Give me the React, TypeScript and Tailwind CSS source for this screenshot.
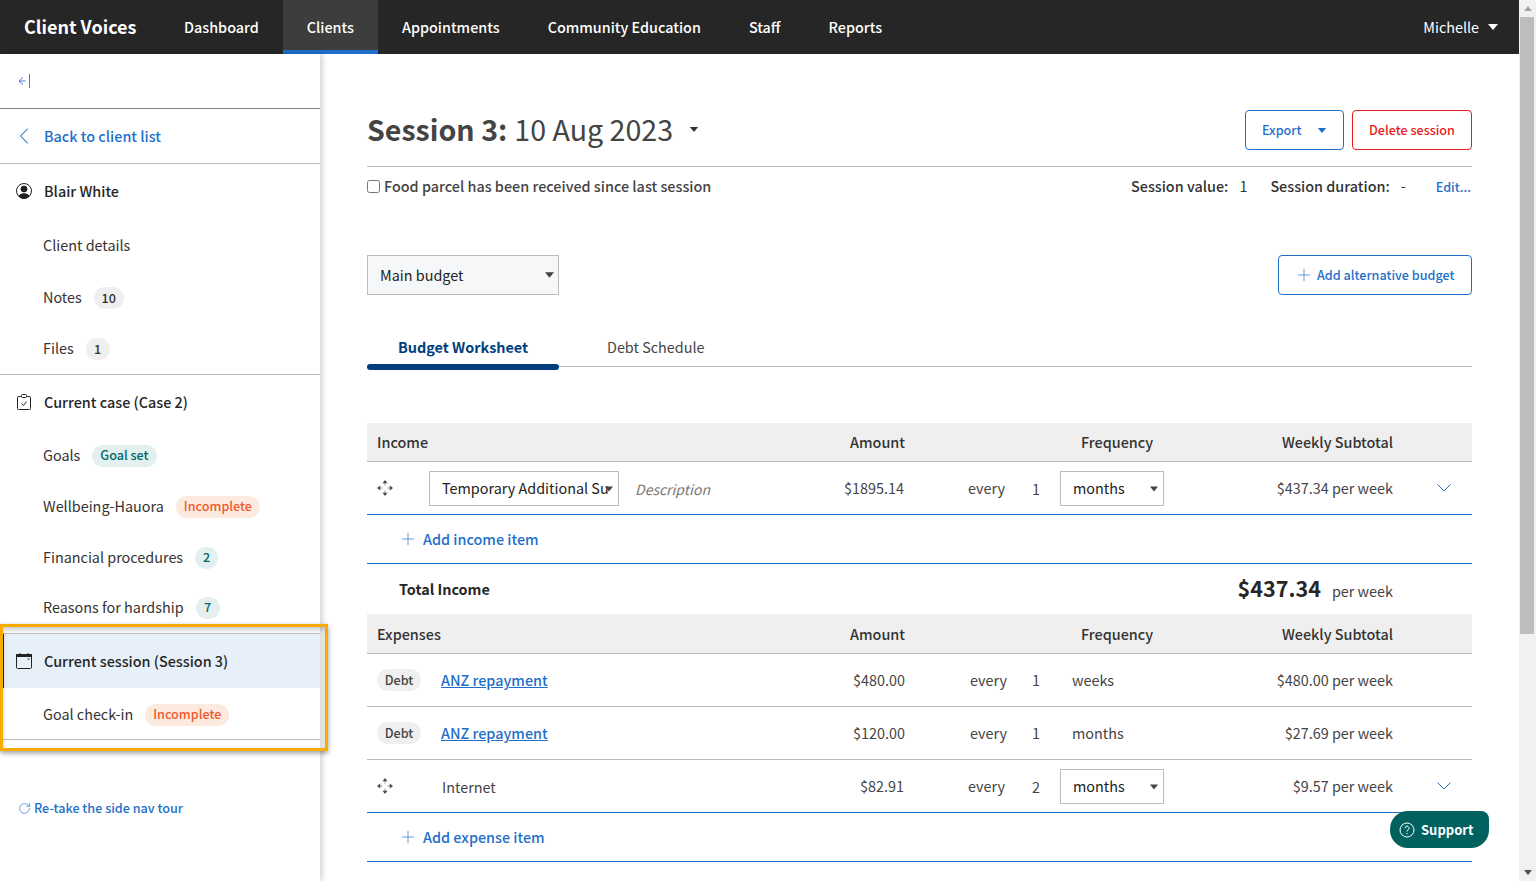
import { ChevronLeft, Plus, RotateCw } from "lucide-react";
import type { ReactNode } from "react";

const rowGrid = "grid grid-cols-[393px_145px_116px_30px_113px_229px_79px] items-center";

function Caret({ className }: { className: string }) {
  return (
    <svg viewBox="0 0 10 6" className={className}>
      <path d="M0 0h10L5 6z" fill="currentColor" />
    </svg>
  );
}

function MoveIcon() {
  return (
    <svg viewBox="0 0 16 16" className="w-4 h-4 text-[#4a4a4a]" fill="none" stroke="currentColor">
      <path d="M8 2.500V5.500M8 10.500V13.500M2.500 8H5.500M10.500 8H13.500" strokeOpacity=".6" />
      <path d="M8 0 10.500 3.200H5.500zM8 16 5.500 12.800H10.500zM0 8 3.200 5.500V10.500zM16 8 12.800 10.500V5.500z" fill="currentColor" stroke="none" />
    </svg>
  );
}

function ChevronThin() {
  return (
    <svg viewBox="0 0 14 8" className="w-[14px] h-2 text-[#1f6fc9]" fill="none" stroke="currentColor">
      <path d="M.5.5 7 7 13.500.5" />
    </svg>
  );
}

function Pill({ tone, children }: { tone: "teal" | "orange"; children: ReactNode }) {
  const cls = tone === "teal" ? "bg-[#e3f0ef] text-[#00696b]" : "bg-[#fdeadf] text-[#f0592b]";
  return (
    <span className={`${cls} mt-[2px] rounded-full h-[22px] px-2 inline-flex items-center text-[12.6px] leading-none font-medium`}>
      {children}
    </span>
  );
}

function Count({ w, teal, children }: { w: string; teal?: boolean; children: ReactNode }) {
  return (
    <span className={`${w} ${teal ? "bg-[#e3f0ef] text-[#00696b]" : "bg-[#efefef]"} mt-[2px] rounded-full h-[22px] flex items-center justify-center text-[12.6px] leading-none font-medium`}>
      {children}
    </span>
  );
}

function SideItem({ h, children }: { h: string; children: ReactNode }) {
  return <div className={`${h} pt-[2px] flex items-center gap-3 pl-[43px] text-[#333]`}>{children}</div>;
}

function SideHead({ h, icon, children }: { h: string; icon: ReactNode; children: ReactNode }) {
  return (
    <div className={`${h} flex items-center text-[#262626] font-medium`}>
      <span className="w-[44px] flex justify-center pl-[4px]">{icon}</span>
      {children}
    </div>
  );
}

function Sidebar() {
  return (
    <aside className="relative z-10 w-[320px] shrink-0 bg-white shadow-[2px_0_6px_rgba(0,0,0,0.2)]">
      <div className="h-[55px] border-b border-[#808080] flex items-center pl-[17px]">
        <svg viewBox="0 0 14 14" className="w-[14px] h-[14px] text-[#4a7bd8]" fill="none" stroke="currentColor">
          <path d="M6 3.500 2 7l4 3.500M2 7h6.500M12.500 0v14" />
        </svg>
      </div>
      <div className="h-[55px] border-b border-[#bdbdbd] flex items-center text-[#1f6fc9] font-medium">
        <span className="w-[44px] flex justify-center pl-[4px]">
          <ChevronLeft className="w-7 h-7" strokeWidth={0.9} />
        </span>
        Back to client list
      </div>
      <SideHead
        h="h-[54px]"
        icon={
          <svg viewBox="0 0 16 16" className="w-4 h-4" fill="none" stroke="#222" strokeWidth="1">
            <circle cx="8" cy="8" r="7.500" />
            <circle cx="8" cy="6" r="3" fill="#222" />
            <path d="M3 13c1-3 9-3 10 0-2 3-8 3-10 0z" fill="#222" />
          </svg>
        }
      >
        Blair White
      </SideHead>
      <SideItem h="h-[52px]">Client details</SideItem>
      <SideItem h="h-[52px]">
        Notes
        <Count w="w-[30px]">10</Count>
      </SideItem>
      <SideItem h="h-[52px] pb-[2px]">
        Files
        <Count w="w-[24px]">1</Count>
      </SideItem>
      <div className="border-t border-[#bdbdbd]" />
      <SideHead
        h="h-[53px]"
        icon={
          <svg viewBox="0 0 14 16" className="w-[14px] h-4" fill="none" stroke="#222">
            <path d="M4 2.500H1.500a1 1 0 0 0-1 1v11a1 1 0 0 0 1 1h11a1 1 0 0 0 1-1v-11a1 1 0 0 0-1-1H10" />
            <rect x="4.500" y=".5" width="5" height="3" rx="1" />
            <path d="M4.500 9.500 6.500 11.500 9.500 7.500" />
          </svg>
        }
      >
        Current case (Case 2)
      </SideHead>
      <SideItem h="h-[51px]">Goals<Pill tone="teal">Goal set</Pill></SideItem>
      <SideItem h="h-[51px]">Wellbeing-Hauora<Pill tone="orange">Incomplete</Pill></SideItem>
      <SideItem h="h-[51px]">
        Financial procedures
        <Count w="w-[23px]" teal>2</Count>
      </SideItem>
      <SideItem h="h-[52px] pb-[3px]">
        Reasons for hardship
        <Count w="w-[24px]" teal>7</Count>
      </SideItem>
      <div className="border-t border-[#bdbdbd]" />
      <div className="ml-[3px] border-l border-[#222] bg-[#e7f0f9]">
        <div className="-ml-[4px]">
          <SideHead
            h="h-[54px]"
            icon={
              <svg viewBox="0 0 16 16" className="w-4 h-4" fill="none" stroke="#222">
                <rect x=".5" y="1.500" width="15" height="14" rx="1" />
                <path d="M.5 1.500h15v2h-15z" fill="#222" />
                <path d="M4 0v2M12 0v2M11.500 6h2" />
              </svg>
            }
          >
            Current session (Session 3)
          </SideHead>
        </div>
      </div>
      <SideItem h="h-[51px] pb-[2px]">Goal check-in<Pill tone="orange">Incomplete</Pill></SideItem>
      <div className="border-t border-[#bdbdbd]" />
      <div className="mt-[56px] flex items-center gap-[3px] pl-[18px] text-[12.6px] font-medium text-[#1f6fc9]">
        <RotateCw className="w-[13px] h-[13px]" strokeWidth={1.2} />
        Re-take the side nav tour
      </div>
      <div className="absolute left-0 top-[570px] w-[328px] h-[127px] border-[3px] border-[#f9ac00] shadow-[0_2px_5px_rgba(0,0,0,0.4),inset_0_3px_4px_rgba(0,0,0,0.2)]" />
    </aside>
  );
}

function Select({ w, children, clip }: { w: string; children: ReactNode; clip?: boolean }) {
  return (
    <div className={`${w} h-[35px] border border-[#bdbdbd] flex items-center pl-3 relative text-[#222] whitespace-nowrap overflow-hidden`}>
      <span className={clip ? "w-[167px] overflow-hidden" : ""}>{children}</span>
      <Caret className="absolute right-[5px] top-[14px] w-2 h-[6px] text-[#444]" />
    </div>
  );
}

function TableHead({ label, h }: { label: string; h: string }) {
  return (
    <div className={`${rowGrid} ${h} bg-[#efefef] border-b border-[#bdbdbd] font-medium text-[#333]`}>
      <span className="pl-[10px]">{label}</span>
      <span className="text-right">Amount</span>
      <span />
      <span />
      <span className="pl-[30px] whitespace-nowrap">Frequency</span>
      <span className="text-right">Weekly Subtotal</span>
      <span />
    </div>
  );
}

function Row({
  lead,
  amount,
  num,
  freq,
  sub,
  blue,
  chevron,
}: {
  lead: ReactNode;
  amount: string;
  num: string;
  freq: ReactNode;
  sub: string;
  blue?: boolean;
  chevron?: boolean;
}) {
  return (
    <div className={`${rowGrid} h-[53px] border-b ${blue ? "border-[#1f6fc9]" : "border-[#bdbdbd]"} text-[#444]`}>
      {lead}
      <span className={`text-right ${blue ? "pr-px" : ""}`}>{amount}</span>
      <span className={`text-right ${blue ? "pr-4" : "pr-[14px]"}`}>every</span>
      <span className={`text-center ${blue ? "pt-[2px]" : ""}`}>{num}</span>
      <span className="pl-[9px]">{freq}</span>
      <span className="text-right">{sub}</span>
      <span className="pl-[44px] flex">{chevron && <ChevronThin />}</span>
    </div>
  );
}

function DebtLead() {
  return (
    <div className="flex items-center pl-[10px] gap-[20px]">
      <span className="bg-[#efefef] rounded-full w-[44px] h-[22px] flex items-center justify-center text-[12.6px] leading-none font-medium text-[#444]">Debt</span>
      <a className="text-[#1f6fc9] underline font-medium">ANZ repayment</a>
    </div>
  );
}

function AddRow({ label }: { label: string }) {
  return (
    <div className="h-[49px] border-b border-[#1f6fc9] flex items-center pl-[31px] gap-[5px] text-[#1f6fc9] font-medium">
      <Plus className="w-5 h-5" strokeWidth={0.8} />
      {label}
    </div>
  );
}

export default function App() {
  return (
    <div className="h-screen flex overflow-hidden bg-white text-[14.4px] leading-6 font-['Noto_Sans_CJK_SC','Source_Sans_Pro',sans-serif]">
      <div className="w-[1519px] shrink-0 flex flex-col relative">
        <header className="h-[54px] shrink-0 bg-[#262626] flex items-center text-white font-medium text-[14.36px]">
          <span className="pl-6 w-[160px] text-[18px] font-bold pb-[2px]">Client Voices</span>
          <nav className="flex h-full">
            {["Dashboard", "Clients", "Appointments", "Community Education", "Staff", "Reports"].map((n) => (
              <span
                key={n}
                className={`flex items-center px-6 h-full ${n === "Clients" ? "bg-[#3d3d3d] border-b-4 border-[#1f6fc9] pt-1" : ""}`}
              >
                {n}
              </span>
            ))}
          </nav>
          <span className="ml-auto font-normal pr-[21px] flex items-center gap-[9px]">
            Michelle
            <Caret className="w-[10px] h-[6px]" />
          </span>
        </header>

        <div className="flex flex-1 min-h-0">
          <Sidebar />
          <main className="flex-1 pl-[47px] pr-[47px] overflow-hidden">
            <div className="pt-[56px] pb-4 flex items-center justify-between border-b border-[#bdbdbd]">
              <h1 className="h-10 pb-[2px] text-[28.6px] leading-[38px] text-[#444] flex items-center">
                <b className="font-bold">Session 3:</b>
                <span className="ml-[7px]">10 Aug 2023</span>
                <Caret className="w-[10px] h-[5px] ml-4 text-[#333]" />
              </h1>
              <div className="flex gap-2 text-[12.6px] font-medium">
                <span className="w-[99px] h-10 border border-[#1f6fc9] rounded-sm text-[#1f6fc9] flex items-center pl-4 gap-[15px]">
                  Export
                  <Caret className="w-[10px] h-[5px]" />
                </span>
                <span className="w-[120px] h-10 border border-[#e61e1e] rounded-sm text-[#e61e1e] flex items-center justify-center">Delete session</span>
              </div>
            </div>

            <div className="h-[38px] flex items-center text-[#444] font-medium">
              <input type="checkbox" readOnly className="w-[13px] h-[13px] mr-[4px]" />
              Food parcel has been received since last session
              <span className="ml-auto mr-px flex items-center text-[#333]">
                Session value:
                <span className="ml-[11px] font-normal">1</span>
                <span className="ml-[23px]">Session duration:</span>
                <span className="ml-[11px] font-normal">-</span>
                <span className="ml-[30px] text-[12.6px] text-[#1f6fc9] pt-px">Edit...</span>
              </span>
            </div>

            <div className="mt-[50px] flex items-center justify-between">
              <div className="w-[192px] h-10 bg-[#f6f7f9] border border-[#bdbdbd] flex items-center pl-3 relative text-[#222]">
                Main budget
                <Caret className="absolute right-1 top-4 w-[9px] h-[6px] text-[#444]" />
              </div>
              <span className="w-[194px] h-10 border border-[#1f6fc9] rounded-sm text-[#1f6fc9] text-[12.6px] font-medium flex items-center pl-[15px] gap-[3px]">
                <Plus className="w-5 h-5" strokeWidth={0.8} />
                Add alternative budget
              </span>
            </div>

            <div className="mt-[31px] h-[41px] border-b border-[#bdbdbd] flex relative">
              <span className="w-[192px] text-center font-bold text-[#003e7e] pt-[9px]">Budget Worksheet</span>
              <span className="ml-[48px] text-[#444] pt-[9px]">Debt Schedule</span>
              <span className="absolute left-0 top-[38px] w-[192px] h-[6px] rounded-full bg-[#003e7e]" />
            </div>

            <div className="mt-[56px]">
              <TableHead label="Income" h="h-[39px]" />
              <Row
                blue
                chevron
                lead={
                  <div className="flex items-center pl-[10px]">
                    <MoveIcon />
                    <span className="ml-[36px]"><Select w="w-[190px]" clip>Temporary Additional Support</Select></span>
                    <i className="ml-4 pt-[2px] text-sm text-[#777]">Description</i>
                  </div>
                }
                amount="$1895.14"
                num="1"
                freq={<Select w="w-[104px]">months</Select>}
                sub="$437.34 per week"
              />
              <AddRow label="Add income item" />
              <div className={`${rowGrid} h-[50px] text-[#262626]`}>
                <span className="pl-[32px] font-bold">Total Income</span>
                <span />
                <span />
                <span />
                <span />
                <span className="text-right text-[#444]">
                  <b className="text-[21.6px] font-bold text-[#262626] mr-[11px]">$437.34</b>per week
                </span>
                <span />
              </div>
              <TableHead label="Expenses" h="h-[40px]" />
              <Row lead={<DebtLead />} amount="$480.00" num="1" freq={<span className="pl-[12px]">weeks</span>} sub="$480.00 per week" />
              <Row lead={<DebtLead />} amount="$120.00" num="1" freq={<span className="pl-[12px]">months</span>} sub="$27.69 per week" />
              <Row
                blue
                chevron
                lead={
                  <div className="flex items-center pl-[10px]">
                    <MoveIcon />
                    <span className="ml-[49px] pt-px">Internet</span>
                  </div>
                }
                amount="$82.91"
                num="2"
                freq={<Select w="w-[104px]">months</Select>}
                sub="$9.57 per week"
              />
              <AddRow label="Add expense item" />
              <div className="h-[50px] pl-[32px] pt-[13px] font-bold text-[#262626]">Total Expenses</div>
            </div>
          </main>
        </div>

        <div className="absolute left-[1390px] top-[811px] w-[99px] h-[37px] rounded-[18px] rounded-tr-[8px] bg-[#00615f] text-white text-[13px] font-bold flex items-center pl-[9px] gap-[6px] z-20">
          <svg viewBox="0 0 16 16" className="w-4 h-4" fill="none" stroke="currentColor">
            <circle cx="8" cy="8" r="7" />
            <path d="M6 6.200a2 2 0 1 1 3 1.700c-.7.4-1 .8-1 1.600M8 11v1.200" />
          </svg>
          Support
        </div>
      </div>

      <div className="w-[17px] shrink-0 bg-[#f1f1f1] flex flex-col items-center justify-between relative">
        <Caret className="w-[8px] h-[5px] mt-[6px] rotate-180 text-[#a3a3a3]" />
        <div className="absolute left-[1px] top-[17px] w-[14px] h-[617px] bg-[#bdbdbd]" />
        <Caret className="w-[8px] h-[5px] mb-[6px] text-[#505050]" />
      </div>
    </div>
  );
}
